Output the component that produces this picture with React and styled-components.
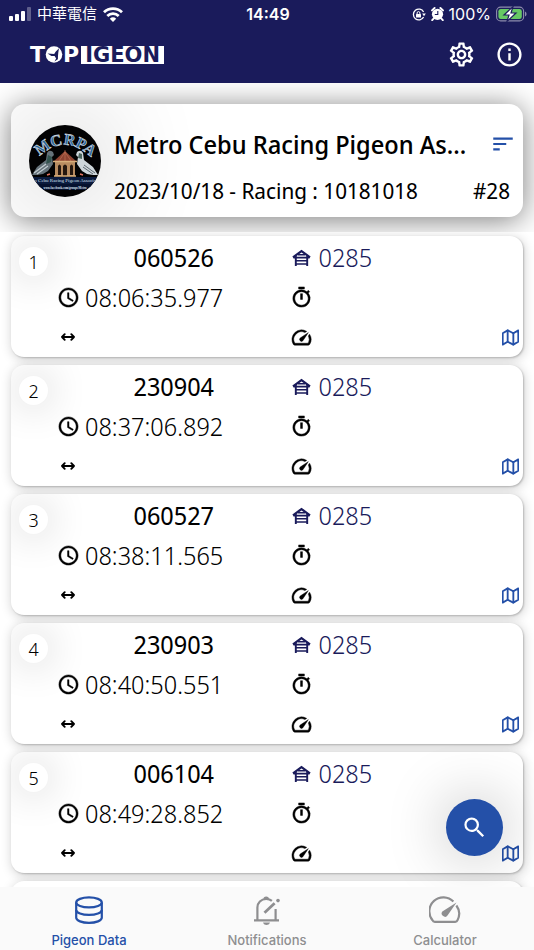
import React from "react";
import styled, { createGlobalStyle } from "styled-components";
import {
  MdOutlineSettings,
  MdInfoOutline,
  MdAccessTime,
  MdOutlineTimer,
  MdOutlineSpeed,
  MdSort,
  MdSearch,
} from "react-icons/md";
import { FiMap } from "react-icons/fi";

const navy = "#1a1b5b";
const blue = "#2450a8";
const uiFont = `"Inter", "Noto Sans CJK TC", sans-serif`;
const bodyFont = `"Noto Sans Display", "Noto Sans", "Open Sans", sans-serif`;

const GlobalStyle = createGlobalStyle`
  *, *::before, *::after { box-sizing: border-box; }
  body { margin: 0; background: #fff; color: #000; font-family: ${bodyFont}; }
  :where(button) { font: inherit; color: inherit; border: 0; padding: 0; background: none; cursor: pointer; }
  h1, h2, p { margin: 0; }
  svg { display: block; flex: none; }
`;

const Screen = styled.div`
  display: flex;
  flex-direction: column;
  height: 100vh;
  overflow: hidden;
`;

const TopBar = styled.header`
  flex: none;
  background: ${navy};
  color: #fff;
  font-family: ${uiFont};
`;

const StatusBar = styled.div`
  display: grid;
  grid-template-columns: 1fr auto 1fr;
  align-items: center;
  height: 28px;
  padding: 0 7px 0 9px;
  font-size: 16px;
  line-height: 20px;
`;

const StatusGroup = styled.div`
  display: flex;
  align-items: center;
  justify-content: ${(p) => (p.$end ? "flex-end" : "flex-start")};
  gap: ${(p) => (p.$end ? 5 : 6)}px;
`;

const Carrier = styled.span`
  font-size: 15px;
`;

const Clock = styled.time`
  font-weight: 600;
`;

const NavBar = styled.div`
  display: flex;
  align-items: center;
  justify-content: space-between;
  height: 55px;
  padding: 0 10px 2px 30px;
`;

const Brand = styled.h1`
  display: flex;
  align-items: center;
  font: 700 22px/18px "DejaVu Sans", sans-serif;
`;

const BrandBox = styled.span`
  margin-left: 2px;
  padding: 0 4px;
  background: #fff;
  color: ${navy};
  font-size: 21px;
`;

const NavActions = styled.div`
  display: flex;
  gap: 19px;
`;

const IconButton = styled.button`
  display: grid;
  place-items: center;
  font-size: ${(p) => p.$size}px;
  color: ${(p) => p.$color || "inherit"};
`;

const Summary = styled.section`
  flex: none;
  padding: 21px 11px 15px;
  overflow: hidden;
  background: #fff;
`;

const SummaryCard = styled.div`
  display: grid;
  grid-template-columns: 72px minmax(0, 1fr) auto;
  column-gap: 13px;
  align-items: center;
  padding: 4px 7px 4px 18px;
  border-radius: 14px;
  background: #fff;
  box-shadow: 0 3px 30px rgba(0, 0, 0, 0.52);
  overflow: hidden;
`;

const Emblem = styled.div`
  width: 72px;
  height: 72px;
  border-radius: 50%;
  box-shadow: 0 0 100px rgba(0, 0, 0, 0.3);
`;

const SummaryText = styled.div`
  display: grid;
  grid-template-rows: 46px 46px;
  align-items: center;
  padding-top: 13px;
  white-space: nowrap;
`;

const Title = styled.h2`
  font-size: 25px;
  font-weight: 500;
  line-height: 36px;
`;

const Subtitle = styled.p`
  font-size: 22px;
  line-height: 32px;
`;

const SummarySide = styled(SummaryText)`
  justify-items: end;
`;

const Count = styled.p`
  padding-right: 6px;
  font-size: 22px;
  line-height: 32px;
`;

const List = styled.ol`
  flex: 1;
  min-height: 0;
  display: flex;
  flex-direction: column;
  gap: 8px;
  margin: 0;
  padding: 4px 11px 8px;
  list-style: none;
  overflow: hidden auto;
  scrollbar-width: none;
`;

const Card = styled.li`
  flex: none;
  display: grid;
  grid-template-columns: 45px minmax(0, 1fr) minmax(0, 1fr);
  grid-template-rows: repeat(3, 40px);
  column-gap: 2px;
  padding-top: 1px;
  border-radius: 13px;
  background: #fff;
  box-shadow: 1px 1px 2px rgba(0, 0, 0, 0.2), 1px 2px 12px rgba(0, 0, 0, 0.2);
  overflow: hidden;
`;

const Rank = styled.span`
  grid-row: 1 / 4;
  display: grid;
  place-items: center;
  width: 29px;
  height: 29px;
  margin: 10px 0 0 8px;
  border-radius: 50%;
  background: #fff;
  box-shadow: 0 0 40px rgba(0, 0, 0, 0.24);
  font-size: 19px;
  font-weight: 300;
  line-height: 28px;
`;

const Cell = styled.div`
  z-index: 1;
  display: flex;
  align-items: center;
  justify-content: ${(p) => (p.$center ? "center" : "flex-start")};
  gap: 7px;
  padding-right: ${(p) => (p.$center ? 0 : 4)}px;
  font-size: 25px;
  font-weight: ${(p) => (p.$center ? 400 : 300)};
  line-height: 36px;
  color: ${(p) => (p.$navy ? navy : "#000")};
`;

const Slot = styled.span`
  display: flex;
  align-items: center;
  justify-content: center;
  width: 20px;
  font-size: 23px;

  svg[fill="currentColor"] { stroke-width: 0.5px; }
  path[fill="none"] { stroke: none; }
`;

const MapButton = styled(IconButton)`
  margin-left: auto;

  svg { stroke-width: 2.6px; }
`;

const SearchButton = styled.button`
  position: fixed;
  z-index: 2;
  right: 31px;
  bottom: 94px;
  display: grid;
  place-items: center;
  width: 57px;
  height: 57px;
  border-radius: 50%;
  background: ${blue};
  color: #fff;
  font-size: 27px;
  box-shadow: 0 0 60px rgba(0, 0, 0, 0.28);
`;

const TabBar = styled.nav`
  position: relative;
  z-index: 3;
  flex: none;
  display: grid;
  grid-template-columns: repeat(3, 1fr);
  height: 63px;
  background: #fafafa;
`;

const Tab = styled.button`
  display: flex;
  flex-direction: column;
  align-items: center;
  justify-content: flex-end;
  padding-bottom: 1px;
  gap: 6px;
  color: ${(p) => (p.$active ? blue : "#8e8e90")};
  font: 500 13px/18px ${uiFont};
`;

const SignalIcon = () => (
  <svg width="22" height="14" viewBox="0 0 22 14" fill="#fff">
    <rect x="0" y="9" width="4" height="5" rx="1" />
    <rect x="6" y="7" width="4" height="7" rx="1" />
    <rect x="12" y="4" width="4" height="10" rx="1" />
    <rect x="18" y="0" width="4" height="14" rx="1" opacity="0.3" />
  </svg>
);

const WifiIcon = () => (
  <svg width="20" height="15" viewBox="0 0 20 15" fill="none" stroke="#fff" strokeWidth="2.8">
    <path d="M1 5.2a13 13 0 0 1 18 0M4.3 8.9a8.2 8.2 0 0 1 11.4 0" />
    <path d="M6.8 11.8a4.7 4.7 0 0 1 6.4 0L10 15z" fill="#fff" stroke="none" />
  </svg>
);

const LockIcon = () => (
  <svg width="14" height="13" viewBox="0 0 14 13" fill="none" stroke="#fff" strokeWidth="1.3">
    <path d="M11.6 4A5.4 5.4 0 1 0 11.6 9" />
    <path d="M10.2 5.6h3.6l-1.8 2.6z" fill="#fff" stroke="none" />
    <rect x="4" y="6" width="5" height="3.6" rx="0.5" fill="#fff" stroke="none" />
    <path d="M5.1 6V5a1.4 1.4 0 0 1 2.8 0v1" strokeWidth="1" />
  </svg>
);

const AlarmIcon = () => (
  <svg width="13" height="14" viewBox="0 0 13 14">
    <circle cx="6.5" cy="7.3" r="5.6" fill="#fff" />
    <path d="M1 3.4L3.6 1M12 3.4L9.4 1M2.6 11.6L1.2 13.2M10.4 11.6l1.4 1.6" stroke="#fff" strokeWidth="1.9" strokeLinecap="round" />
    <path d="M6.8 4v3.5H3.8" stroke={navy} strokeWidth="1.1" fill="none" />
  </svg>
);

const BatteryIcon = () => (
  <svg width="31" height="16" viewBox="0 0 31 16">
    <rect x="0.6" y="1.1" width="27" height="13.8" rx="4" fill="none" stroke="#fff" strokeOpacity="0.5" strokeWidth="1.1" />
    <rect x="2.4" y="2.9" width="23.4" height="10.2" rx="2.4" fill="#66c864" />
    <path d="M29 5.6v4.8q1.6-.6 1.6-2.4T29 5.6z" fill="#fff" opacity="0.5" />
    <path d="M17 0.6L8 9h5l-2 6.4L20 7h-5z" fill="#fff" stroke={navy} strokeWidth="1.2" />
  </svg>
);

const BrandPigeon = () => (
  <svg width="18" height="17" viewBox="0 0 18 17" role="img" aria-label="O">
    <circle cx="9" cy="8.5" r="8.3" fill="#fff" />
    <path d="M14 2.2L10.6 5.8 9.2 8 2.6 7.6l3.8 2.3 3.2.2 1.5 2.4-1.6 3 3.4-2.2.1-3.6.3-3.2z" fill={navy} />
  </svg>
);

const LoftIcon = () => (
  <svg width="19" height="17" viewBox="0 0 19 17" fill="none" stroke={navy}>
    <path d="M1 8.3L9.5 2l8.5 6.3" strokeWidth="2.2" />
    <path d="M3.8 7v10M15.2 7v10" strokeWidth="1.9" />
    <path d="M6 5.7h7M1.5 8.6h16M4 11.7h11M4 15h11" strokeWidth="1.6" />
  </svg>
);

const DistanceIcon = () => (
  <svg width="14" height="8" viewBox="0 0 14 8" fill="none" stroke="#000" strokeWidth="1.9" strokeLinejoin="round" strokeLinecap="round">
    <path d="M1 4h12M3.7 1.2L1 4l2.7 2.8M10.3 1.2L13 4l-2.7 2.8" />
  </svg>
);

const DatabaseIcon = () => (
  <svg width="30" height="30" viewBox="0 0 30 30" fill="none" stroke="currentColor" strokeWidth="2.2">
    <ellipse cx="15" cy="7.4" rx="12.8" ry="5" />
    <path d="M2.2 7.4v15.4c0 2.8 5.8 5 12.8 5s12.8-2.2 12.8-5V7.4" />
    <path d="M2.2 14.9c0 2.8 5.8 5 12.8 5s12.8-2.2 12.8-5" />
  </svg>
);

const BellEditIcon = () => (
  <svg width="30" height="30" viewBox="0 0 30 30" fill="none" stroke="currentColor" strokeWidth="2.2">
    <path d="M2 25.4h25M5.4 25V12.6c0-5 3.6-8.6 8.8-8.6 2.4 0 4.2.6 5.7 1.9M23.6 14v11.4" />
    <path d="M11.4 4.2a2.8 2.8 0 0 1 5.6 0zM11 27.5h7c-.8 1.8-2 2.5-3.5 2.5S11.8 29.3 11 27.5z" fill="currentColor" stroke="none" />
    <path d="M12.5 17.8L22.6 8.2" strokeWidth="2.8" />
    <circle cx="26" cy="5.6" r="1.8" fill="currentColor" stroke="none" />
  </svg>
);

const GaugeIcon = () => (
  <svg width="32" height="30" viewBox="0 0 32 30" fill="none" stroke="currentColor" strokeWidth="2.2">
    <path d="M24.4 6.6A14 14 0 0 0 3.5 25.2Q4.1 26.8 5.8 26.8H26.2Q27.9 26.8 28.5 25.2A14 14 0 0 0 27.4 10.5" />
    <path d="M27.5 7.5L18.7 20.3a3.3 3.3 0 0 1-5.4-3.8z" fill="currentColor" stroke="none" />
  </svg>
);

const ClubEmblem = () => (
  <svg width="72" height="72" viewBox="0 0 72 72">
    <defs>
      <clipPath id="emblemClip"><circle cx="36" cy="36" r="36" /></clipPath>
      <path id="emblemArc" d="M11 31Q36 8 62 32" />
    </defs>
    <g clipPath="url(#emblemClip)">
      <rect width="72" height="72" fill="#020203" />
      <text fontFamily="Liberation Serif, serif" fontWeight="700" fontSize="16" fill="#28659b" stroke="#d2dbe0" strokeWidth="0.6">
        <textPath href="#emblemArc" startOffset="50%" textAnchor="middle">MCRPA</textPath>
      </text>
      <path d="M3 50l5-8 9-7 1-7q2-4 6-1l1 3-2 2 1 7-5 7-5 3-6 1z" fill="#65727a" />
      <path d="M19 30l4 2-1 5-5 2z" fill="#33534e" />
      <path d="M5 48l12-9M8 49l11-8" stroke="#c1cbd0" strokeWidth="1.2" />
      <path d="M69 50l-5-8-9-7-1-7q-2-4-6-1l-1 3 2 2-1 7 5 7 5 3 6 1z" fill="#ced6da" />
      <path d="M50 28l3 1v5l-4-1z" fill="#4d6660" />
      <path d="M66 48l-11-8M64 49l-10-7" stroke="#5d6870" strokeWidth="1" />
      <path d="M18 50l3-1M51 49l3 1" stroke="#df715d" strokeWidth="1.6" />
      <path d="M25 36l11-10 11 10z" fill="#8e4331" />
      <path d="M36 25v11M36 27l-6 9M36 27l6 9" stroke="#c6785b" strokeWidth="0.6" />
      <path d="M26 36h20v15H26z" fill="#b78b60" />
      <path d="M29 50V41q1.5-3 3 0v9zM34 51V41q2-3 4 0v10zM41 50V41q1.5-3 3 0v9z" fill="#25170f" />
      <path d="M24 36.5h24M25 51h22" stroke="#d8af7c" strokeWidth="1.3" />
      <path d="M0 52h72v7H0z" fill="#0b1b3e" />
      <path d="M4 59h64v6H4z" fill="#06112e" />
      <g fontFamily="Liberation Serif, serif" textAnchor="middle" fill="#d9e3f4">
        <text x="36" y="57" fontSize="5">tro Cebu Racing Pigeon Associati</text>
        <text x="36" y="64" fontSize="3" fontWeight="700">www.facebook.com/groups/Metro</text>
      </g>
    </g>
  </svg>
);

const records = [
  { ring: "060526", time: "08:06:35.977", loft: "0285" },
  { ring: "230904", time: "08:37:06.892", loft: "0285" },
  { ring: "060527", time: "08:38:11.565", loft: "0285" },
  { ring: "230903", time: "08:40:50.551", loft: "0285" },
  { ring: "006104", time: "08:49:28.852", loft: "0285" },
];

function PigeonCard({ rank, record }) {
  return (
    <Card>
      <Rank>{rank}</Rank>
      <Cell $center>{record.ring}</Cell>
      <Cell $navy>
        <Slot><LoftIcon /></Slot>
        {record.loft}
      </Cell>
      <Cell>
        <Slot><MdAccessTime /></Slot>
        {record.time}
      </Cell>
      <Cell><Slot><MdOutlineTimer /></Slot></Cell>
      <Cell><Slot><DistanceIcon /></Slot></Cell>
      <Cell>
        <Slot><MdOutlineSpeed /></Slot>
        <MapButton $size={17} $color={blue} aria-label="Map"><FiMap /></MapButton>
      </Cell>
    </Card>
  );
}

export default function App() {
  return (
    <Screen>
      <GlobalStyle />
      <TopBar>
        <StatusBar>
          <StatusGroup>
            <SignalIcon />
            <Carrier lang="zh-Hant">中華電信</Carrier>
            <WifiIcon />
          </StatusGroup>
          <Clock>14:49</Clock>
          <StatusGroup $end>
            <LockIcon />
            <AlarmIcon />
            <span>100%</span>
            <BatteryIcon />
          </StatusGroup>
        </StatusBar>
        <NavBar>
          <Brand>
            T<BrandPigeon />P<BrandBox>IGEON</BrandBox>
          </Brand>
          <NavActions>
            <IconButton $size={29} aria-label="Settings"><MdOutlineSettings /></IconButton>
            <IconButton $size={29} aria-label="Information"><MdInfoOutline /></IconButton>
          </NavActions>
        </NavBar>
      </TopBar>
      <Summary>
        <SummaryCard>
          <Emblem><ClubEmblem /></Emblem>
          <SummaryText>
            <Title>Metro Cebu Racing Pigeon As...</Title>
            <Subtitle>2023/10/18 - Racing : 10181018</Subtitle>
          </SummaryText>
          <SummarySide>
            <IconButton $size={26} $color={blue} aria-label="Sort"><MdSort /></IconButton>
            <Count>#28</Count>
          </SummarySide>
        </SummaryCard>
      </Summary>
      <List>
        {records.map((record, i) => (
          <PigeonCard key={record.ring} rank={i + 1} record={record} />
        ))}
        <Card />
      </List>
      <SearchButton aria-label="Search"><MdSearch /></SearchButton>
      <TabBar>
        <Tab $active><DatabaseIcon />Pigeon Data</Tab>
        <Tab><BellEditIcon />Notifications</Tab>
        <Tab><GaugeIcon />Calculator</Tab>
      </TabBar>
    </Screen>
  );
}
